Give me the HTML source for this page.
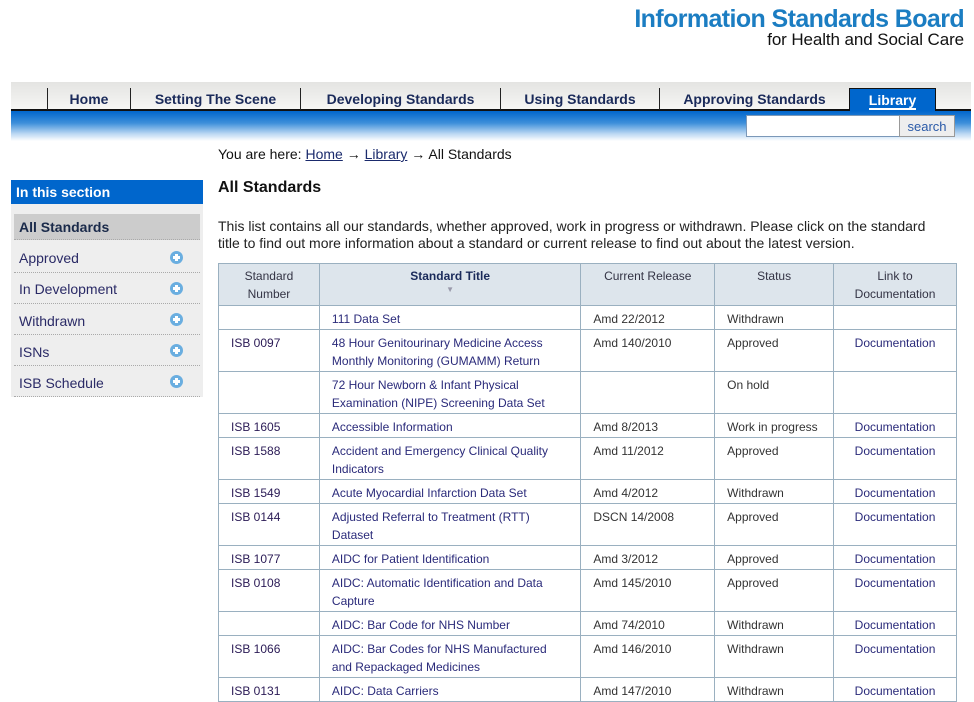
<!DOCTYPE html>
<html><head><meta charset="utf-8"><style>
*{margin:0;padding:0;box-sizing:border-box}
body{width:974px;height:701px;overflow:hidden;background:#fff;font-family:"Liberation Sans",Arial,sans-serif;position:relative}
.a{position:absolute}
.logo1{right:10px;top:5px;font-size:25px;font-weight:bold;color:#1b7dc2;letter-spacing:-0.6px;white-space:nowrap}
.logo2{right:10px;top:30px;font-size:17px;color:#111;letter-spacing:-0.1px;white-space:nowrap}
.nav{left:11px;top:82px;width:960px;height:29px;background:linear-gradient(#e4e4e2,#f6f6f4);border-bottom:2px solid #111}
.tab{position:absolute;top:6px;height:22px;font-size:14px;font-weight:bold;color:#1a2a5a;line-height:22px;text-align:center;border-left:1px solid #222}
.lib{position:absolute;left:838px;top:6px;width:87px;height:23px;background:#0066cc;border:1px solid #111;border-bottom:none;color:#fff;font-size:14px;font-weight:bold;text-align:center;line-height:22px}
.lib span{border-bottom:2px solid #fff}
.band{left:11px;top:111px;width:960px;height:30px;background:linear-gradient(#0066cc,#3d8fda 40%,#b8d6f2 75%,#fff)}
.sbox{left:746px;top:115px;width:154px;height:22px;background:#fff;border:1px solid #7b98b8}
.sbtn{left:899px;top:115px;width:56px;height:22px;background:#eee;border:1px solid #999;color:#2a5aa8;font-size:13px;line-height:21px;text-align:center}
.crumb{left:218px;top:146px;font-size:14px;color:#111}
.crumb u{color:#1a2a6c}
h1{position:absolute;left:218px;top:179px;font-size:16px;font-weight:bold;color:#111}
.intro{left:218px;top:218px;width:728px;font-size:14px;line-height:17px;color:#222}
.side{left:11px;top:180px;width:192px;height:217px;background:#eee}
.sh{height:24px;background:#0066cc;color:#fff;font-weight:bold;font-size:14px;line-height:24px;padding-left:5px}
.si{position:absolute;left:3px;width:186px;font-size:14px;color:#2a2a66;padding-left:5px;border-bottom:1px dotted #aaa}
.ic{position:absolute;right:17px;width:13px;height:13px;border-radius:50%;background:#6aaee0}
.ic:before{content:"";position:absolute;left:3px;top:5px;width:7px;height:3px;background:#fff}
.ic:after{content:"";position:absolute;left:5px;top:3px;width:3px;height:7px;background:#fff}
table{position:absolute;left:218px;top:263px;width:739px;border-collapse:collapse;font-size:12px;color:#333}
td,th{border:1px solid #9ab0c0;vertical-align:top;padding:4px 12px 0;line-height:18px;text-align:left;font-weight:normal}
th{background:#dde5ec;text-align:center;color:#334;height:42px;padding-top:3px}
th.t{font-weight:bold;color:#1a2a5a}
td.n{color:#2a1a55}
td.ti{color:#2a2a7a}
td.d{color:#2a2a7a;text-align:center}
tr.s td{height:24px}
tr.w td{height:42px}
</style></head><body>
<div class="a logo1">Information Standards Board</div>
<div class="a logo2">for Health and Social Care</div>
<div class="a nav">
<div class="tab" style="left:36px;width:83px">Home</div>
<div class="tab" style="left:119px;width:170px">Setting The Scene</div>
<div class="tab" style="left:289px;width:200px">Developing Standards</div>
<div class="tab" style="left:489px;width:159px">Using Standards</div>
<div class="tab" style="left:648px;width:190px">Approving Standards</div>
<div class="lib"><span>Library</span></div>
</div>
<div class="a band"></div>
<div class="a sbox"></div>
<div class="a sbtn">search</div>
<div class="a crumb">You are here: <u>Home</u> → <u>Library</u> → All Standards</div>
<h1>All Standards</h1>
<div class="a intro">This list contains all our standards, whether approved, work in progress or withdrawn. Please click on the standard title to find out more information about a standard or current release to find out about the latest version.</div>
<div class="a side">
<div class="sh">In this section</div>
<div class="si" style="top:34px;height:26px;background:#ccc;font-weight:bold;color:#1a2a4a;line-height:26px">All Standards</div>
<div class="si" style="top:62px;height:31px;line-height:32px">Approved<span class="ic" style="top:9px"></span></div>
<div class="si" style="top:93px;height:31px;line-height:32px">In Development<span class="ic" style="top:9px"></span></div>
<div class="si" style="top:124px;height:31px;line-height:34px">Withdrawn<span class="ic" style="top:9px"></span></div>
<div class="si" style="top:155px;height:31px;line-height:34px">ISNs<span class="ic" style="top:9px"></span></div>
<div class="si" style="top:186px;height:31px;line-height:34px">ISB Schedule<span class="ic" style="top:9px"></span></div>
</div>
<table>
<colgroup><col style="width:101px"><col style="width:262px"><col style="width:134px"><col style="width:119px"><col style="width:123px"></colgroup>
<tr><th>Standard<br>Number</th><th class="t">Standard Title<br><span style="color:#99a;font-size:8px;line-height:8px;position:relative;top:-6px">▼</span></th><th>Current Release</th><th>Status</th><th>Link to<br>Documentation</th></tr>
<tr class="s"><td class="n"></td><td class="ti">111 Data Set</td><td>Amd 22/2012</td><td>Withdrawn</td><td></td></tr>
<tr class="w"><td class="n">ISB 0097</td><td class="ti">48 Hour Genitourinary Medicine Access Monthly Monitoring (GUMAMM) Return</td><td>Amd 140/2010</td><td>Approved</td><td class="d">Documentation</td></tr>
<tr class="w"><td class="n"></td><td class="ti">72 Hour Newborn &amp; Infant Physical Examination (NIPE) Screening Data Set</td><td></td><td>On hold</td><td></td></tr>
<tr class="s"><td class="n">ISB 1605</td><td class="ti">Accessible Information</td><td>Amd 8/2013</td><td>Work in progress</td><td class="d">Documentation</td></tr>
<tr class="w"><td class="n">ISB 1588</td><td class="ti">Accident and Emergency Clinical Quality Indicators</td><td>Amd 11/2012</td><td>Approved</td><td class="d">Documentation</td></tr>
<tr class="s"><td class="n">ISB 1549</td><td class="ti">Acute Myocardial Infarction Data Set</td><td>Amd 4/2012</td><td>Withdrawn</td><td class="d">Documentation</td></tr>
<tr class="w"><td class="n">ISB 0144</td><td class="ti">Adjusted Referral to Treatment (RTT) Dataset</td><td>DSCN 14/2008</td><td>Approved</td><td class="d">Documentation</td></tr>
<tr class="s"><td class="n">ISB 1077</td><td class="ti">AIDC for Patient Identification</td><td>Amd 3/2012</td><td>Approved</td><td class="d">Documentation</td></tr>
<tr class="w"><td class="n">ISB 0108</td><td class="ti">AIDC: Automatic Identification and Data Capture</td><td>Amd 145/2010</td><td>Approved</td><td class="d">Documentation</td></tr>
<tr class="s"><td class="n"></td><td class="ti">AIDC: Bar Code for NHS Number</td><td>Amd 74/2010</td><td>Withdrawn</td><td class="d">Documentation</td></tr>
<tr class="w"><td class="n">ISB 1066</td><td class="ti">AIDC: Bar Codes for NHS Manufactured and Repackaged Medicines</td><td>Amd 146/2010</td><td>Withdrawn</td><td class="d">Documentation</td></tr>
<tr class="s"><td class="n">ISB 0131</td><td class="ti">AIDC: Data Carriers</td><td>Amd 147/2010</td><td>Withdrawn</td><td class="d">Documentation</td></tr>
</table>
</body></html>
